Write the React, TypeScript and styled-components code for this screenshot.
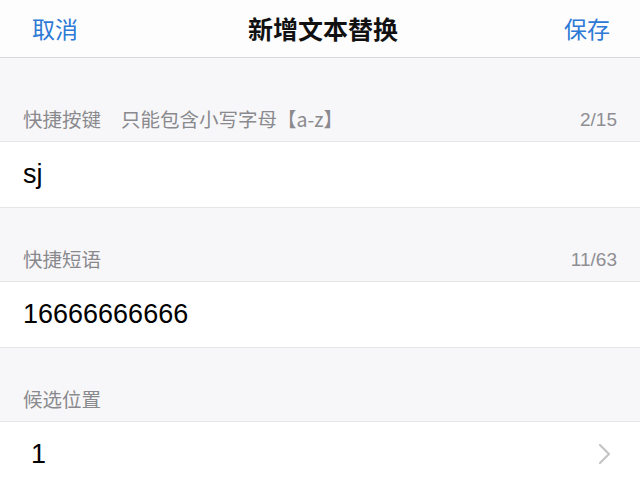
import React from "react";
import styled, { createGlobalStyle } from "styled-components";

const Global = createGlobalStyle`
  html, body { margin: 0; padding: 0; background: #f7f7f9; }
  body { font-family: "Liberation Sans", "Noto Sans CJK SC", sans-serif; }
  #root { min-height: 480px; }
`;

const Page = styled.div`
  width: 640px;
  height: 480px;
  overflow: hidden;
  background: #f7f7f9;
  display: flex;
  flex-direction: column;
`;

const NavBar = styled.div`
  height: 57px;
  flex: none;
  background: #fdfdfd;
  border-bottom: 1.5px solid #d9d9d9;
  display: flex;
  align-items: center;
  justify-content: space-between;
  padding: 0 30px 0 32px;
  box-sizing: content-box;
`;

const NavButton = styled.span`
  font-family: "Noto Sans CJK SC", sans-serif;
  font-size: 23px;
  color: #2c79d6;
  line-height: 1;
`;

const Title = styled.span`
  font-family: "Noto Sans CJK SC", sans-serif;
  font-size: 25px;
  font-weight: 600;
  color: #111;
  line-height: 1;
  margin-left: 4px;
`;

const SectionHeader = styled.div<{ $first?: boolean }>`
  height: ${(p) => (p.$first ? 83.5 : 74)}px;
  flex: none;
  box-sizing: border-box;
  border-bottom: 1px solid #e6e6e9;
  display: flex;
  align-items: flex-end;
  justify-content: space-between;
  padding: 0 23px 12px 23px;
  color: #8a8a8e;
  font-size: 19.5px;
`;

const Label = styled.span`
  font-family: "Noto Sans CJK SC", sans-serif;
  line-height: 1;
  display: flex;
  gap: 20px;
`;

const Count = styled.span`
  font-family: "Liberation Sans", sans-serif;
  font-size: 19px;
  line-height: 1;
  color: #8e8e93;
`;

const Row = styled.div`
  height: 66px;
  flex: none;
  box-sizing: border-box;
  background: #fff;
  border-bottom: 1px solid #e6e6e9;
  display: flex;
  align-items: center;
  justify-content: space-between;
  padding: 0 28px 0 23px;
`;

const Value = styled.span<{ $indent?: number }>`
  font-family: "Liberation Sans", sans-serif;
  font-size: 27px;
  color: #000;
  line-height: 1;
  padding-left: ${(p) => p.$indent ?? 0}px;
`;

const Chevron = () => (
  <svg width="14" height="22" viewBox="0 0 14 22" fill="none">
    <path d="M2 2 L11 11 L2 20" stroke="#c4c4c7" strokeWidth="2.2" strokeLinecap="round" strokeLinejoin="round" />
  </svg>
);

export default function App() {
  return (
    <>
      <Global />
      <Page>
        <NavBar>
          <NavButton>取消</NavButton>
          <Title>新增文本替换</Title>
          <NavButton>保存</NavButton>
        </NavBar>
        <SectionHeader $first>
          <Label>
            <span>快捷按键</span>
            <span>只能包含小写字母【a-z】</span>
          </Label>
          <Count>2/15</Count>
        </SectionHeader>
        <Row>
          <Value>sj</Value>
        </Row>
        <SectionHeader>
          <Label>快捷短语</Label>
          <Count>11/63</Count>
        </SectionHeader>
        <Row>
          <Value>16666666666</Value>
        </Row>
        <SectionHeader>
          <Label>候选位置</Label>
        </SectionHeader>
        <Row>
          <Value $indent={8}>1</Value>
          <Chevron />
        </Row>
      </Page>
    </>
  );
}
